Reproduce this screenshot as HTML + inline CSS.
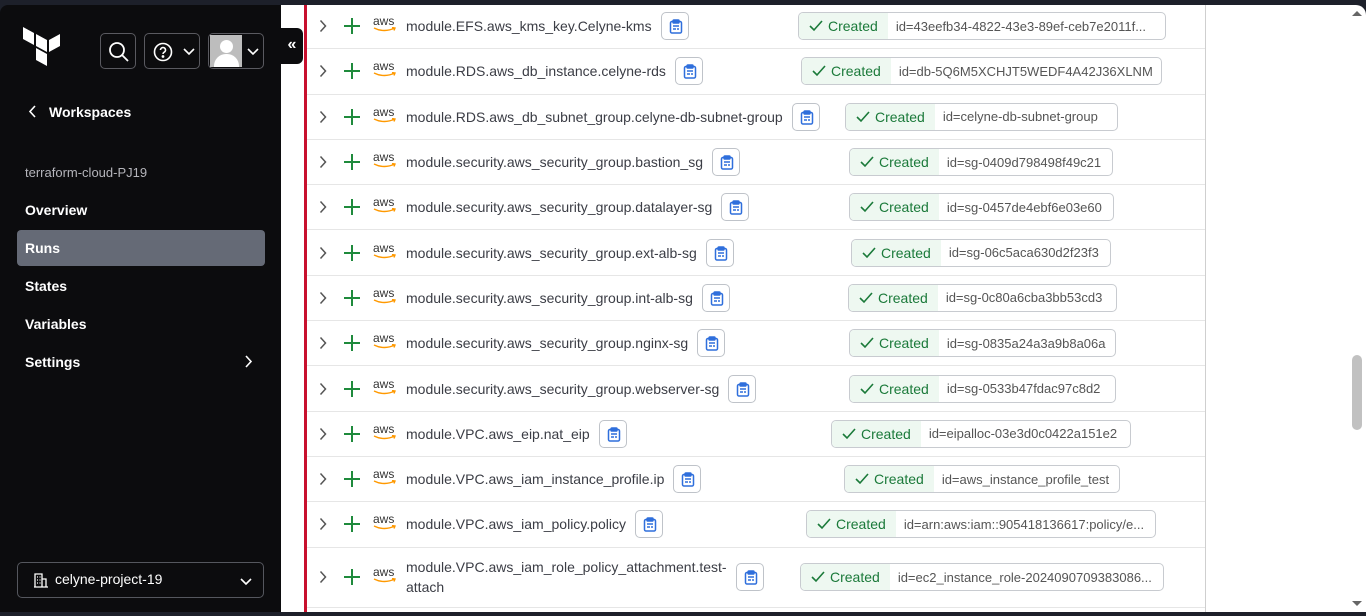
<!DOCTYPE html>
<html><head><meta charset="utf-8"><style>
*{box-sizing:border-box;margin:0;padding:0}
body{width:1366px;height:616px;overflow:hidden;background:#1d202a;font-family:"Liberation Sans",sans-serif;position:relative}
.side{position:absolute;left:0;top:5px;width:281px;height:607px;background:#0c0c0e;border-top-left-radius:8px}
.main{position:absolute;left:281px;top:5px;width:1085px;height:607px;background:#fff;border-top-right-radius:10px}
.red{position:absolute;left:304px;top:5px;width:3px;height:607px;background:#c8102e}
.rline{position:absolute;left:1205px;top:5px;width:1px;height:607px;background:#cfcfcf}
.row{position:absolute;left:307px;width:898px;border-bottom:1px solid #e6e6e6;height:45px}
.row .chev{position:absolute;left:12px;top:50%;margin-top:-7px}
.row .plus{position:absolute;left:36px;top:50%;margin-top:-9px}
.row .aws{position:absolute;left:66px;top:50%;margin-top:-11px;font-size:12px;color:#333;line-height:12px}
.row .aws svg{display:block}
.row .t{position:absolute;left:99px;top:50%;transform:translateY(-50%);font-size:14px;color:#3b3d45;display:flex;align-items:center;white-space:nowrap}
.cp{display:inline-block;width:28px;height:28px;border:1px solid #bfc3c9;border-radius:5px;margin-left:9px;position:relative;background:#fff;flex:none}
.cp svg{position:absolute;left:7px;top:6px}
.b{position:absolute;top:50%;margin-top:-14px;height:28px;border:1px solid #c8cbd0;border-radius:5px;display:flex;font-size:14px;overflow:hidden;white-space:nowrap}
.b .c{background:#eef8f1;color:#1b7a3a;padding:0 10px 0 10px;display:flex;align-items:center;gap:5px}
.b .i{color:#555;padding:0 8px;display:flex;align-items:center;font-size:13px}
.nav{position:absolute;left:25px;color:#fff;font-size:14px;font-weight:bold}
.btn{position:absolute;top:28px;height:36px;border:1px solid #5a5a60;border-radius:5px}
</style></head><body>
<div class="side">
 <svg style="position:absolute;left:23px;top:22px" width="37" height="40" viewBox="0 0 37 40"><path d="M0 0l11 6v12L0 12zM13 7l11 6v12l-11-6zM26 13l11-6v12l-11 6zM13 21l11 6v12l-11-6z" fill="#fff"/></svg>
 <div class="btn" style="left:100px;width:36px"><svg style="position:absolute;left:7px;top:7px" width="22" height="22" viewBox="0 0 22 22" fill="none" stroke="#fff" stroke-width="1.8"><circle cx="9" cy="9" r="7"/><path d="M14 14l6 6"/></svg></div>
 <div class="btn" style="left:144px;width:56px"><svg style="position:absolute;left:8px;top:8px" width="20" height="20" viewBox="0 0 20 20" fill="none" stroke="#fff" stroke-width="1.6"><circle cx="10" cy="10" r="8.5"/><path d="M7.5 8a2.5 2.5 0 1 1 3.5 2.3c-.7.4-1 .8-1 1.7"/><circle cx="10" cy="14.5" r=".6" fill="#fff"/></svg><svg style="position:absolute;left:38px;top:14px" width="12" height="8" viewBox="0 0 12 8" fill="none" stroke="#fff" stroke-width="1.6"><path d="M1 1l5 5 5-5"/></svg></div>
 <div class="btn" style="left:208px;width:56px"><div style="position:absolute;left:1px;top:1px;width:32px;height:32px;background:#bdbdbd;overflow:hidden"><div style="position:absolute;left:10px;top:5px;width:13px;height:13px;border-radius:50%;background:#fff"></div><div style="position:absolute;left:4px;top:19px;width:25px;height:20px;border-radius:12px 12px 0 0;background:#fff"></div></div><svg style="position:absolute;left:38px;top:14px" width="12" height="8" viewBox="0 0 12 8" fill="none" stroke="#fff" stroke-width="1.6"><path d="M1 1l5 5 5-5"/></svg></div>
 <svg style="position:absolute;left:29px;top:100px" width="8" height="13" viewBox="0 0 8 13" fill="none" stroke="#fff" stroke-width="1.6"><path d="M6 1L1 6.5 6 12"/></svg>
 <div class="nav" style="left:49px;top:99px">Workspaces</div>
 <div class="nav" style="top:160px;font-weight:normal;color:#b5b5bb;font-size:13px">terraform-cloud-PJ19</div>
 <div class="nav" style="top:197px">Overview</div>
 <div style="position:absolute;left:17px;top:225px;width:248px;height:36px;background:#656a76;border-radius:4px"></div>
 <div class="nav" style="top:235px">Runs</div>
 <div class="nav" style="top:273px">States</div>
 <div class="nav" style="top:311px">Variables</div>
 <div class="nav" style="top:349px">Settings</div>
 <svg style="position:absolute;left:245px;top:350px" width="8" height="13" viewBox="0 0 8 13" fill="none" stroke="#fff" stroke-width="1.6"><path d="M1 1l5 5.5L1 12"/></svg>
 <div style="position:absolute;left:17px;top:557px;width:247px;height:36px;border:1px solid #55575e;border-radius:5px"></div>
 <svg style="position:absolute;left:34px;top:568px" width="14" height="15" viewBox="0 0 14 15" fill="none" stroke="#fff" stroke-width="1.3"><path d="M1 14V1h7v13M8 6h4v8M3 4h1M5.5 4h1M3 7h1M5.5 7h1M3 10h1M5.5 10h1M0 14h14"/></svg>
 <div class="nav" style="left:55px;top:566px;font-weight:normal;font-size:14px">celyne-project-19</div>
 <svg style="position:absolute;left:240px;top:573px" width="12" height="8" viewBox="0 0 12 8" fill="none" stroke="#fff" stroke-width="1.6"><path d="M1 1l5 5 5-5"/></svg>
</div>
<div class="main"></div>
<div style="position:absolute;left:281px;top:28px;width:22px;height:36px;background:#0c0c0e;border-radius:0 6px 6px 0;color:#fff;font-size:16px;font-weight:bold;line-height:34px;text-align:center">«</div>
<div class="red"></div>
<div class="rline"></div>
<div style="position:absolute;left:1352px;top:355px;width:10px;height:75px;background:#c1c1c1;border-radius:5px"></div>
<svg style="position:absolute;left:1352px;top:10px" width="10" height="7" viewBox="0 0 10 7" fill="#666"><path d="M0 6l5-5 5 5z"/></svg>
<svg style="position:absolute;left:1352px;top:600px" width="10" height="7" viewBox="0 0 10 7" fill="#666"><path d="M0 1l5 5 5-5z"/></svg>
<div id="rows"></div>
<script>
var R=[
["module.EFS.aws_kms_key.Celyne-kms",798,1166,"id=43eefb34-4822-43e3-89ef-ceb7e2011f..."],
["module.RDS.aws_db_instance.celyne-rds",801,1162,"id=db-5Q6M5XCHJT5WEDF4A42J36XLNM"],
["module.RDS.aws_db_subnet_group.celyne-db-subnet-group",845,1118,"id=celyne-db-subnet-group"],
["module.security.aws_security_group.bastion_sg",849,1113,"id=sg-0409d798498f49c21"],
["module.security.aws_security_group.datalayer-sg",849,1114,"id=sg-0457de4ebf6e03e60"],
["module.security.aws_security_group.ext-alb-sg",851,1111,"id=sg-06c5aca630d2f23f3"],
["module.security.aws_security_group.int-alb-sg",848,1117,"id=sg-0c80a6cba3bb53cd3"],
["module.security.aws_security_group.nginx-sg",849,1116,"id=sg-0835a24a3a9b8a06a"],
["module.security.aws_security_group.webserver-sg",849,1116,"id=sg-0533b47fdac97c8d2"],
["module.VPC.aws_eip.nat_eip",831,1131,"id=eipalloc-03e3d0c0422a151e2"],
["module.VPC.aws_iam_instance_profile.ip",844,1120,"id=aws_instance_profile_test"],
["module.VPC.aws_iam_policy.policy",806,1156,"id=arn:aws:iam::905418136617:policy/e..."],
["module.VPC.aws_iam_role_policy_attachment.test-<br>attach",800,1164,"id=ec2_instance_role-2024090709383086..."]];
var h="",y=4;
var cp='<span class="cp"><svg width="14" height="15" viewBox="0 0 14 15" fill="none" stroke="#2f6fdc" stroke-width="1.5"><rect x="1.5" y="2.5" width="11" height="11.5" rx="1.5"/><rect x="4" y="1" width="6" height="3" rx=".8" fill="#2f6fdc"/><path d="M4 7h6M4 10h3M8 10l2 0"/></svg></span>';
for(var k=0;k<R.length;k++){var r=R[k];var H=k==12?60:45.3;
h+='<div class="row" style="top:'+y+'px;height:'+H+'px"><svg class="chev" width="8" height="14" viewBox="0 0 8 14" fill="none" stroke="#555" stroke-width="1.5"><path d="M1.5 1.5L6.5 7l-5 5.5"/></svg><svg class="plus" width="18" height="18" viewBox="0 0 18 18" stroke="#1f8a3c" stroke-width="2"><path d="M9 1v16M1 9h16"/></svg><div class="aws">aws<svg width="24" height="6" viewBox="0 0 24 6" fill="none" stroke="#f90" stroke-width="1.4"><path d="M1 1q10 5 21 0M19 0.5l3 .5-1 2.5"/></svg></div><div class="t"><span style="line-height:20px">'+r[0]+'</span>'+cp+'</div><div class="b" style="left:'+(r[1]-307)+'px;width:'+(r[2]-r[1])+'px"><span class="c"><svg width="14" height="12" viewBox="0 0 14 12" fill="none" stroke="#1b7a3a" stroke-width="1.6"><path d="M1 6l4 4 8-9"/></svg>Created</span><span class="i">'+r[3]+'</span></div></div>';y+=H;}
document.getElementById("rows").innerHTML=h;
</script>
</body></html>
